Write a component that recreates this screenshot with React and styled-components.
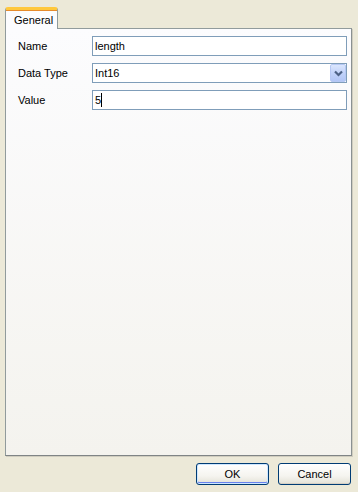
import React from 'react';
import styled, { createGlobalStyle } from 'styled-components';

const GlobalStyle = createGlobalStyle`
  html, body {
    margin: 0;
    padding: 0;
    background: #ece9d8;
    font-family: "Liberation Sans", Arial, sans-serif;
    font-size: 11px;
    color: #000;
  }
`;

const Dialog = styled.div`
  width: 358px;
  height: 492px;
  box-sizing: border-box;
  display: flex;
  flex-direction: column;
  padding: 7px 5px 0 5px;
`;

const TabStrip = styled.div`
  display: flex;
  height: 21px;
  position: relative;
  z-index: 1;
`;

const Tab = styled.div`
  width: 53px;
  box-sizing: border-box;
  border: 1px solid #919b9c;
  border-bottom: none;
  border-top: 3px solid #ffc83c;
  border-radius: 3px 3px 0 0;
  background: #fcfcfe;
  padding: 4px 0 0 8px;
  height: 22px;
  box-shadow: inset 0 1px 0 #e68b2c;
`;

const Panel = styled.div`
  height: 428px;
  box-sizing: border-box;
  border: 1px solid #919b9c;
  border-right-color: #8a9192;
  border-bottom-color: #7f8485;
  box-shadow: 1px 1px 0 #d0cdbf;
  background: linear-gradient(to bottom, #fcfcfe, #f4f3ee);
  padding: 7px 4px 0 12px;
  display: grid;
  grid-template-columns: 74px 1fr;
  grid-auto-rows: 20px;
  row-gap: 7px;
  align-content: start;
  margin-right: 1px;
`;

const Label = styled.div`
  display: flex;
  align-items: center;
  height: 20px;
`;

const Field = styled.div`
  height: 20px;
  box-sizing: border-box;
  border: 1px solid #7f9db9;
  background: #fff;
  display: flex;
  align-items: center;
  padding-left: 2px;
  position: relative;
`;

const Caret = styled.span`
  display: inline-block;
  width: 1px;
  height: 14px;
  background: #000;
`;

const DropButton = styled.div`
  position: absolute;
  right: 0;
  top: 0;
  width: 16px;
  height: 18px;
  box-sizing: border-box;
  border: 1px solid #b6c8f4;
  border-radius: 2px;
  background: linear-gradient(to bottom, #dbe6fd, #c0d1f9 55%, #b2c6f5);
  display: flex;
  align-items: center;
  justify-content: center;
`;

const Footer = styled.div`
  display: flex;
  justify-content: flex-end;
  gap: 9px;
  padding: 7px 2px 0 0;
`;

const Button = styled.button`
  width: 73px;
  height: 22px;
  box-sizing: border-box;
  border: 1px solid #003c74;
  border-radius: 3px;
  background: linear-gradient(to bottom, #ffffff 0%, #f5f4ef 60%, #e3e1d6 100%);
  font-family: "Liberation Sans", Arial, sans-serif;
  font-size: 11px;
  color: #000;
  padding: 0;
  box-shadow: ${(p) => (p.$default ? 'inset 0 0 0 1px #cee7ff, inset 0 -1px 0 1px #6982ee' : 'inset 0 -1px 0 #d6d0c5')};
`;

export default function App() {
  return (
    <>
      <GlobalStyle />
      <Dialog>
        <TabStrip>
          <Tab>General</Tab>
        </TabStrip>
        <Panel>
          <Label>Name</Label>
          <Field>length</Field>
          <Label>Data Type</Label>
          <Field>
            Int16
            <DropButton>
              <svg width="9" height="7" viewBox="0 0 9 7">
                <path d="M1 1.5 L4.5 5 L8 1.5" stroke="#4d6185" strokeWidth="2.2" fill="none" />
              </svg>
            </DropButton>
          </Field>
          <Label>Value</Label>
          <Field>
            5<Caret />
          </Field>
        </Panel>
        <Footer>
          <Button $default>OK</Button>
          <Button>Cancel</Button>
        </Footer>
      </Dialog>
    </>
  );
}
